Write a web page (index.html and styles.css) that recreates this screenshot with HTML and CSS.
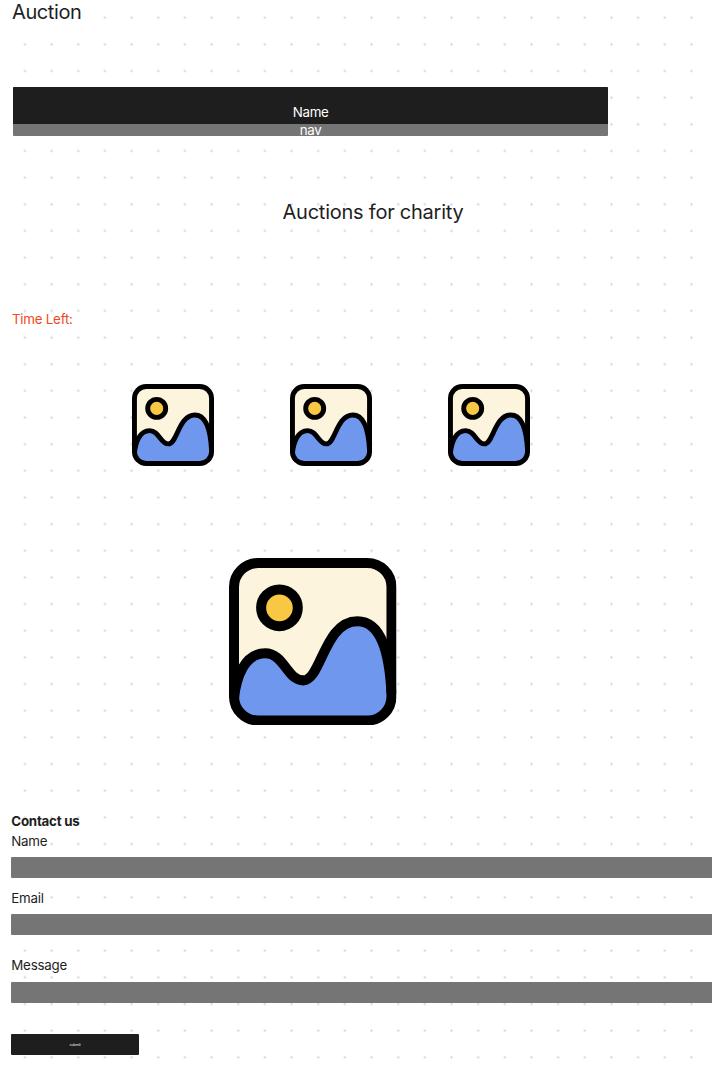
FILE: index.html
```html
<!DOCTYPE html>
<html lang="en">
<head>
<meta charset="utf-8">
<title>Auction</title>
<link rel="stylesheet" href="styles.css">
</head>
<body>
<svg class="defs" width="0" height="0" aria-hidden="true">
  <symbol id="picture" viewBox="0 0 167 167">
    <rect x="5" y="5" width="157" height="157" rx="24" fill="#fdf4de"/>
    <path d="M5 140C7 120 15 95 36 95C55 95 58 122 74 122C92 122 95 63 128 63C152 63 160 95 162 135V138A24 24 0 0 1 138 162H29A24 24 0 0 1 5 138Z" fill="#6f97ee"/>
    <path d="M5 140C7 120 15 95 36 95C55 95 58 122 74 122C92 122 95 63 128 63C152 63 160 95 162 135" fill="none" stroke="#000" stroke-width="10"/>
    <circle cx="50.3" cy="49.7" r="18.3" fill="#f8c744" stroke="#000" stroke-width="10"/>
    <rect x="5" y="5" width="157" height="157" rx="24" fill="none" stroke="#000" stroke-width="10"/>
  </symbol>
</svg>
<header class="site-header">
  <h1 class="site-title">Auction</h1>
</header>
<div class="topbar">
  <div class="topbar-name">Name</div>
  <nav class="topbar-nav">nav</nav>
</div>
<h2 class="tagline">Auctions for charity</h2>
<p class="time-left">Time Left:</p>
<section class="thumbs">
  <svg class="thumb"><use href="#picture"/></svg>
  <svg class="thumb"><use href="#picture"/></svg>
  <svg class="thumb"><use href="#picture"/></svg>
</section>
<svg class="feature"><use href="#picture"/></svg>
<form class="contact">
  <h3 class="contact-title">Contact us</h3>
  <label class="field-label">Name</label>
  <div class="field"></div>
  <label class="field-label field-label-email">Email</label>
  <div class="field"></div>
  <label class="field-label field-label-message">Message</label>
  <div class="field field-message"></div>
  <button class="submit" type="button">submit</button>
</form>
</body>
</html>
```
FILE: styles.css
```css
* {
  box-sizing: border-box;
}

html {
  overflow: hidden;
}

body {
  margin: 0;
  width: 712px;
  height: 1080px;
  overflow: hidden;
  font-family: Inter, "Liberation Sans", sans-serif;
  letter-spacing: -0.015em;
  color: #1e1e1e;
  background-color: #fff;
  background-image: radial-gradient(circle at center, #d0d0d0 0, #d9d9d9 0.8px, rgba(255, 255, 255, 0) 1.5px);
  background-size: 26.667px 26.667px;
  background-position: 11.67px 4.37px;
}

.defs {
  display: block;
  height: 0;
}

.site-header {
  padding: 0 0 0 12px;
}

.site-title {
  margin: 0;
  height: 87.3px;
  font-size: 20px;
  line-height: 24px;
  font-weight: 400;
  letter-spacing: -0.02em;
}

.topbar {
  margin-left: 13px;
  width: 595.3px;
  height: 48.7px;
  border-radius: 1px;
  background: #757575;
  color: #fff;
  font-size: 13.33px;
  text-align: center;
}

.topbar-name {
  height: 36.7px;
  padding-top: 17px;
  line-height: 17px;
  border-radius: 1px 1px 0 0;
  background: #1e1e1e;
}

.topbar-nav {
  line-height: 12px;
}

.tagline {
  margin: 64px 0 0;
  padding-left: 34px;
  font-size: 20px;
  line-height: 24px;
  font-weight: 400;
  text-align: center;
}

.time-left {
  margin: 87px 0 0 12px;
  font-size: 13.33px;
  line-height: 17px;
  color: #f24822;
}

.thumbs {
  display: flex;
  gap: 76px;
  margin: 56px 0 0 132.3px;
}

.thumb {
  display: block;
  width: 82px;
  height: 82px;
}

.feature {
  display: block;
  width: 167.5px;
  height: 167.5px;
  margin: 92px 0 0 229.3px;
}

.contact {
  margin: 87.5px 0 0 11.3px;
}

.contact-title {
  margin: 0;
  font-size: 13.33px;
  line-height: 17px;
  font-weight: 700;
}

.field-label {
  display: block;
  margin-top: 3px;
  font-size: 13.33px;
  line-height: 17px;
}

.field-label-email {
  margin-top: 11.6px;
}

.field-label-message {
  margin-top: 22px;
}

.field {
  width: 720px;
  height: 21px;
  margin-top: 7.2px;
  border-radius: 1px;
  background: #757575;
}

.field-message {
  margin-top: 8.4px;
}

.submit {
  display: block;
  width: 127.7px;
  height: 21px;
  margin-top: 31px;
  padding: 0;
  border: 0;
  border-radius: 1px;
  background: #1e1e1e;
  color: #fff;
  font-family: inherit;
  font-size: 3.5px;
}
```
